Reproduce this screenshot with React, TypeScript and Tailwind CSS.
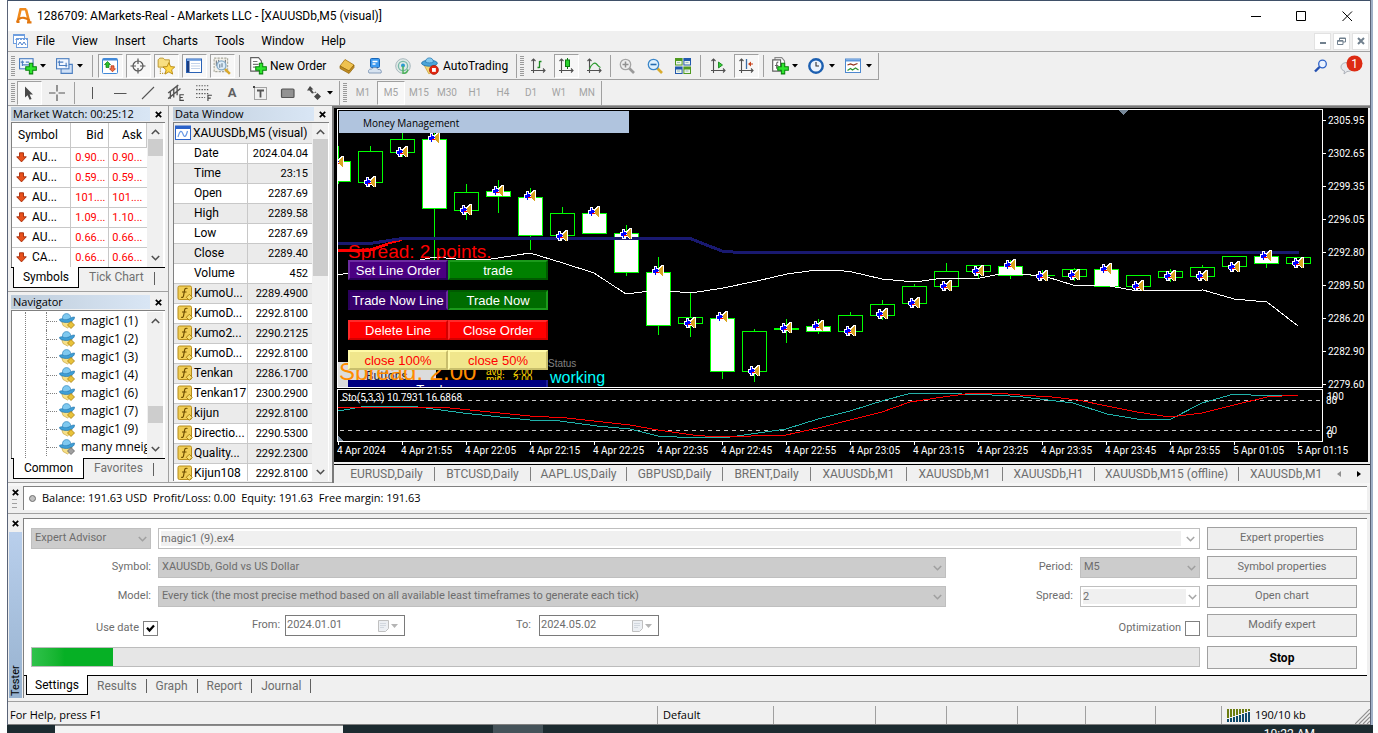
import type { ReactNode } from 'react'

interface Candle {
  high: number
  top: number
  bottom: number
  low: number
  mark: number
  bear?: boolean
}

// One candle every 32px, y values are pixels below the top of the plot
const CANDLES: Candle[] = [
  { high: 36, top: 51, bottom: 71, low: 73, mark: 52, bear: true },
  { high: 36, top: 41, bottom: 72, low: 72, mark: 72 },
  { high: 20, top: 29, bottom: 42, low: 46, mark: 42 },
  { high: 22, top: 29, bottom: 98, low: 150, mark: 28, bear: true },
  { high: 74, top: 82, bottom: 100, low: 109, mark: 100 },
  { high: 70, top: 81, bottom: 86, low: 102, mark: 81, bear: true },
  { high: 78, top: 87, bottom: 125, low: 139, mark: 86, bear: true },
  { high: 97, top: 103, bottom: 125, low: 125, mark: 126 },
  { high: 103, top: 103, bottom: 123, low: 123, mark: 102, bear: true },
  { high: 115, top: 123, bottom: 162, low: 165, mark: 124, bear: true },
  { high: 147, top: 162, bottom: 215, low: 224, mark: 161, bear: true },
  { high: 183, top: 207, bottom: 213, low: 226, mark: 213 },
  { high: 204, top: 208, bottom: 261, low: 268, mark: 207, bear: true },
  { high: 219, top: 221, bottom: 261, low: 271, mark: 261 },
  { high: 209, top: 218, bottom: 219, low: 232, mark: 218 },
  { high: 209, top: 216, bottom: 221, low: 223, mark: 216, bear: true },
  { high: 202, top: 205, bottom: 221, low: 221, mark: 221 },
  { high: 190, top: 194, bottom: 205, low: 209, mark: 204 },
  { high: 174, top: 176, bottom: 193, low: 193, mark: 193 },
  { high: 153, top: 161, bottom: 176, low: 176, mark: 176 },
  { high: 155, top: 155, bottom: 161, low: 168, mark: 161 },
  { high: 150, top: 156, bottom: 165, low: 168, mark: 155, bear: true },
  { high: 160, top: 165, bottom: 165, low: 168, mark: 166 },
  { high: 158, top: 159, bottom: 166, low: 170, mark: 165 },
  { high: 156, top: 159, bottom: 176, low: 176, mark: 159, bear: true },
  { high: 165, top: 165, bottom: 176, low: 176, mark: 176 },
  { high: 159, top: 161, bottom: 167, low: 171, mark: 166 },
  { high: 155, top: 157, bottom: 166, low: 166, mark: 166 },
  { high: 146, top: 146, bottom: 156, low: 156, mark: 157 },
  { high: 142, top: 146, bottom: 153, low: 157, mark: 146, bear: true },
  { high: 147, top: 147, bottom: 153, low: 153, mark: 153 },
]

const PRICES = ['2305.95', '2302.65', '2299.35', '2296.05', '2292.80', '2289.50', '2286.20', '2282.90', '2279.60']

const TIMES = [
  '4 Apr 2024', '4 Apr 21:55', '4 Apr 22:05', '4 Apr 22:15', '4 Apr 22:25', '4 Apr 22:35', '4 Apr 22:45', '4 Apr 22:55',
  '4 Apr 23:05', '4 Apr 23:15', '4 Apr 23:25', '4 Apr 23:35', '4 Apr 23:45', '4 Apr 23:55', '5 Apr 01:05', '5 Apr 01:15',
]

const QUOTES = [
  ['AU...', '0.90...', '0.90...'],
  ['AU...', '0.59...', '0.59...'],
  ['AU...', '101....', '101....'],
  ['AU...', '1.09...', '1.10...'],
  ['AU...', '0.66...', '0.66...'],
  ['CA...', '0.66...', '0.66...'],
]

const BAR_DATA = [
  ['Date', '2024.04.04'], ['Time', '23:15'], ['Open', '2287.69'], ['High', '2289.58'],
  ['Low', '2287.69'], ['Close', '2289.40'], ['Volume', '452'],
]

const INDICATOR_DATA = [
  ['KumoU...', '2289.4900'], ['KumoD...', '2292.8100'], ['Kumo2...', '2290.2125'], ['KumoD...', '2292.8100'],
  ['Tenkan', '2286.1700'], ['Tenkan17', '2300.2900'], ['kijun', '2292.8100'], ['Directio...', '2290.5300'],
  ['Quality...', '2292.2300'], ['Kijun108', '2292.8100'],
]

const EXPERTS = ['magic1 (1)', 'magic1 (2)', 'magic1 (3)', 'magic1 (4)', 'magic1 (6)', 'magic1 (7)', 'magic1 (9)', 'many mneig']

const CHART_TABS = [
  { label: 'EURUSD,Daily', width: 'w-24' },
  { label: 'BTCUSD,Daily', width: 'w-24' },
  { label: 'AAPL.US,Daily', width: 'w-24' },
  { label: 'GBPUSD,Daily', width: 'w-24' },
  { label: 'BRENT,Daily', width: 'w-[88px]' },
  { label: 'XAUUSDb,M1', width: 'w-24' },
  { label: 'XAUUSDb,M1', width: 'w-24' },
  { label: 'XAUUSDb,H1', width: 'w-[92px]' },
  { label: 'XAUUSDb,M15 (offline)', width: 'w-36' },
]

const PERIODS = ['M1', 'M5', 'M15', 'M30', 'H1', 'H4', 'D1', 'W1', 'MN']

/* ---------- small shared pieces ---------- */

function Icon({ children, size = 16 }: { children: ReactNode; size?: number }) {
  return (
    <svg width={size} height={size} viewBox="0 0 16 16" fill="none" className="shrink-0">
      {children}
    </svg>
  )
}

function Grip() {
  return (
    <div className="ml-[3px] flex h-[20px] w-1 flex-col justify-between">
      {Array.from({ length: 10 }, (_, i) => (
        <span key={i} className="h-px w-full bg-[#9a9a9a]" />
      ))}
    </div>
  )
}

function Separator() {
  return <div className="mx-[3px] h-[22px] w-px bg-[#a0a0a0]" />
}

function Caret() {
  return (
    <svg width="6" height="4" viewBox="0 0 6 4" className="shrink-0">
      <path d="M0 0h6L3 3.5z" fill="#000" />
    </svg>
  )
}

function ToolButton({ label, pressed, children }: { label: string; pressed?: boolean; children: ReactNode }) {
  return (
    <button type="button" aria-label={label} className="flex h-6 w-7 shrink-0 items-center justify-center">
      <span
        className={
          pressed
            ? 'flex h-6 w-[25px] items-center justify-center border border-r-white border-b-white border-l-[#a0a0a0] border-t-[#a0a0a0] bg-[#f7f7f7]'
            : 'flex h-6 w-[25px] items-center justify-center'
        }
      >
        {children}
      </span>
    </button>
  )
}

function DropButton({ label, children }: { label: string; children: ReactNode }) {
  return (
    <button type="button" aria-label={label} className="flex h-6 w-[37px] shrink-0 items-center justify-between pr-[6px] pl-1">
      {children}
      <Caret />
    </button>
  )
}

function Chevron({ up, color = '#505050' }: { up?: boolean; color?: string }) {
  return (
    <svg width="9" height="6" viewBox="0 0 9 6" fill="none" className="shrink-0">
      <path d={up ? 'M.8 5 4.5 1.3 8.2 5' : 'M.8 1 4.5 4.7 8.2 1'} stroke={color} strokeWidth="1.6" />
    </svg>
  )
}

function CloseGlyph() {
  return (
    <svg width="7" height="7" viewBox="0 0 7 7" className="shrink-0">
      <path d="M.8.8l5.4 5.4M6.2.8.8 6.2" stroke="#000" strokeWidth="1.7" />
    </svg>
  )
}

function PaneTitle({ title }: { title: string }) {
  return (
    <div className="flex h-[14px] items-center justify-between pr-[2px]">
      <h2 className="mr-1 h-full grow bg-linear-to-r from-[#bfcddb] to-[#d9e6f5] pl-[2px] font-['Open_Sans',sans-serif] leading-[13px]">{title}</h2>
      <button type="button" aria-label={`Close ${title}`} className="p-px">
        <CloseGlyph />
      </button>
    </div>
  )
}

function ScrollBar({ offset, thumb }: { offset: string; thumb: string }) {
  return (
    <div className="flex w-4 shrink-0 flex-col items-center justify-between bg-[#f0f0f0] py-[6px]">
      <Chevron up />
      <div className={`w-[15px] grow ${offset}`}>
        <div className={`w-full bg-[#cdcdcd] ${thumb}`} />
      </div>
      <Chevron />
    </div>
  )
}

function PaneTabs({ active, other, width }: { active: string; other: string; width: string }) {
  return (
    <div className="flex h-[22px] border-t border-black pl-[2px] text-xs">
      <button type="button" className={`-mt-px h-[21px] border border-t-0 border-black bg-white pb-px ${width}`}>
        {active}
      </button>
      <button type="button" className="h-[18px] px-[10px] text-[#707070]">
        {other}
      </button>
      <span className="mt-1 h-[13px] w-px bg-[#606060]" />
    </div>
  )
}

/* ---------- icons ---------- */

const axes = <path d="M3.5 1v14M1 12.5h14M1.5 3l2-2 2 2M13 10.5l2 2-2 2" stroke="#505050" strokeWidth="1.1" />
const plus = <path d="M9.2 5.500h3v3.200h3.200v3h-3.200V15h-3v-3.300H6v-3h3.200z" fill="#2ee62e" stroke="#08820c" strokeWidth=".9" />
const lensHandle = 'M10 10l5 5'

function AdvisorIcon({ badge = '#e8c23a', edge = '#a87d0c' }: { badge?: string; edge?: string }) {
  return (
    <>
      <path d="M2.500 8h10.500l-1.500 4.500-3 2.500-4.500-2.500z" fill="#f6df85" stroke="#c49a30" strokeWidth=".6" />
      <path d="M.3 6.500C2 4.800 5 6.500 8 6.200s5-2.500 7.500-2.200c.3 3-3.500 5.500-8 5.500C4 9.500.8 8.700.3 6.500z" fill="#3f9fd6" stroke="#1f6fa6" strokeWidth=".6" />
      <path d="M3.500 6C3 2.800 4.800.6 7.500.6c2.500 0 4 1.600 4.300 4.200-2 1.800-6 2.500-8.300 1.200z" fill="#7fc9f0" stroke="#2a7db5" strokeWidth=".6" />
      <path d="M12 8.500l3.500 3.500-3.500 3.500L8.500 12z" fill={badge} stroke={edge} strokeWidth=".8" />
    </>
  )
}

function FunctionIcon() {
  return (
    <Icon>
      <rect x="1" y="1" width="13.500" height="13.500" rx="1.500" fill="#f0cd55" stroke="#b68d1b" />
      <path d="M10.500 3.500c-2-.8-2.700.3-3 2L6.500 11c-.2 1.300-1 1.700-2.300 1.200M5 7h4.500" stroke="#6d4c00" strokeWidth="1.200" />
      <path d="M12.300 9.300l3 3-3 3-3-3z" fill="#f5dd70" stroke="#a67a0a" strokeWidth=".9" />
    </Icon>
  )
}

function DownArrow() {
  return (
    <svg width="11" height="11" viewBox="0 0 11 11" className="shrink-0">
      <path d="M3.500.8h4v4h2.800L5.500 9.900.7 4.800h2.800z" fill="#e8501c" stroke="#a32a08" strokeWidth=".9" />
    </svg>
  )
}

function ListIcon() {
  return (
    <Icon>
      <rect x=".5" y="1" width="15" height="13.500" fill="#fff" stroke="#2a62b5" />
      <path d="M1 2h14" stroke="#5b92dc" strokeWidth="1.500" />
      <path d="M1 3h2.500v11H1z" fill="#1b3d80" />
      <path d="M5 5.500h9M5 8h9M5 10.500h9" stroke="#c3d3ea" />
    </Icon>
  )
}

/* ---------- window chrome ---------- */

function TitleBar() {
  return (
    <header className="flex h-[31px] items-center border-t border-[#3f5068] bg-white pl-2 text-xs">
      <svg width="16" height="16" viewBox="0 0 16 16" className="mr-[5px]" fill="none">
        <path d="M3.500 1.300h6.800M4.500 1.500 2 12.500M10 1.500l3.300 13" stroke="#f08a1c" strokeWidth="2.600" />
        <path d="M1 14c1-3 4-4.500 7-4.200 2.500.2 4 1.200 5.500 3M.5 14h3M11 14.300h4.500" stroke="#e2770f" strokeWidth="2.200" />
      </svg>
      <h1>1286709: AMarkets-Real - AMarkets LLC - [XAUUSDb,M5 (visual)]</h1>
      <div className="ml-auto flex">
        <button type="button" aria-label="Minimize" className="flex w-[45px] justify-center">
          <svg width="11" height="11" viewBox="0 0 11 11"><path d="M0 5.500h10" stroke="#000" /></svg>
        </button>
        <button type="button" aria-label="Maximize" className="flex w-[45px] justify-center">
          <svg width="11" height="11" viewBox="0 0 11 11"><path d="M.5.5h9v9h-9z" fill="none" stroke="#000" /></svg>
        </button>
        <button type="button" aria-label="Close" className="flex w-[46px] justify-center">
          <svg width="11" height="11" viewBox="0 0 11 11"><path d="M.5.5l9.500 9.500M10 .5.5 10" stroke="#000" /></svg>
        </button>
      </div>
    </header>
  )
}

function MenuBar() {
  return (
    <nav className="flex h-[21px] items-center border-b border-[#a0a0a0] pl-[5px] text-xs">
      <Icon>
        <rect x=".5" y="1.500" width="11" height="9" fill="#fff" stroke="#6f9ede" />
        <path d="M1 2.500h10M2.500 7l1.500-2 1.500 2" stroke="#6f9ede" />
        <rect x="3.500" y="5.500" width="11" height="9" fill="#fff" stroke="#6f9ede" />
        <path d="M4 6.500h10" stroke="#6f9ede" strokeDasharray="2 1" />
        <path d="M5 12l2-3 2 3 2-3 2 3" stroke="#4a80cd" />
      </Icon>
      <ul className="ml-[7px] flex gap-[17px]">
        {['File', 'View', 'Insert', 'Charts', 'Tools', 'Window', 'Help'].map((item) => (
          <li key={item}>
            <button type="button">{item}</button>
          </li>
        ))}
      </ul>
      <div className="ml-auto flex gap-[2px] pr-px">
        <button type="button" aria-label="Minimize chart" className="flex h-[17px] w-[17px] items-center justify-center border border-[#e2e2e2] bg-white">
          <span className="mt-1 h-[2px] w-[6px] bg-[#71808e]" />
        </button>
        <button type="button" aria-label="Restore chart" className="flex h-[17px] w-[17px] items-center justify-center border border-[#e2e2e2] bg-white">
          <svg width="9" height="9" viewBox="0 0 9 9" fill="none" stroke="#71808e">
            <path d="M2.500 3V1h6v4H6M.5 3.500h5.500v4H.5zM2 1.500h6M.5 4.200h5.500" />
          </svg>
        </button>
        <button type="button" aria-label="Close chart" className="flex h-[17px] w-[17px] items-center justify-center border border-[#e2e2e2] bg-white">
          <svg width="8" height="8" viewBox="0 0 8 8"><path d="M1 1l6 6M7 1 1 7" stroke="#71808e" strokeWidth="2" /></svg>
        </button>
      </div>
    </nav>
  )
}

function MainToolbar() {
  return (
    <div className="flex h-[28px] items-start pt-px text-xs">
      <div className="flex h-[27px] items-center border-b border-r border-[#a0a0a0]">
        <Grip />
        <DropButton label="New chart">
          <Icon size={18}>
            <rect x=".5" y="1.500" width="12" height="9" fill="#f2f7ff" stroke="#4d7fc0" />
            <path d="M3 3v5M1.500 4.500h3M3 7h6M6 4.500h3" stroke="#4d7fc0" />
            {plus}
          </Icon>
        </DropButton>
        <DropButton label="Profiles">
          <Icon size={18}>
            <path d="M4.500 6.500h10v8h-10z" fill="#cfe0f7" stroke="#4d7fc0" />
            <rect x=".5" y="1.500" width="11" height="9" fill="#f2f7ff" stroke="#4d7fc0" />
            <path d="M1.500 4.500h5M3 3v5M9 5v4M3 7.500h7" stroke="#4d7fc0" />
          </Icon>
        </DropButton>
        <Separator />
        <ToolButton label="Market Watch" pressed>
          <Icon>
            <rect x=".5" y=".5" width="15" height="15" rx="1" fill="#fff" stroke="#4088d8" />
            <path d="M1 1.500h14" stroke="#4088d8" strokeWidth="2" />
            <path d="M5.500 3.500l3 3H7v3H4v-3H2.500z" fill="#2bc12b" stroke="#0a7a10" strokeWidth=".7" />
            <path d="M10.500 13.800l3-3H12v-3H9v3H7.500z" fill="#f07045" stroke="#b02c0c" strokeWidth=".7" />
          </Icon>
        </ToolButton>
        <ToolButton label="Data Window" pressed>
          <Icon>
            <circle cx="8" cy="8" r="5" stroke="#555" strokeWidth="1.200" />
            <path d="M8 .5V6M8 10v5.500M.5 8H6M10 8h5.500" stroke="#555" strokeWidth="1.200" />
          </Icon>
        </ToolButton>
        <ToolButton label="Navigator" pressed>
          <Icon size={18}>
            <path d="M1 2.500l1.500-1.500h3L7 2.500h4V9H1z" fill="#f8df82" stroke="#b8922b" strokeWidth=".8" />
            <path d="M3 10v4.500h4" stroke="#b8922b" strokeDasharray="1 1" />
            <path d="M10.500 5l1.600 3.500 3.700.4-2.800 2.500.9 3.800-3.400-2-3.300 2 .9-3.800-2.800-2.500 3.700-.4z" fill="#ffd84a" stroke="#b5870f" strokeWidth=".8" />
          </Icon>
        </ToolButton>
        <ToolButton label="Terminal" pressed><ListIcon /></ToolButton>
        <ToolButton label="Strategy Tester" pressed>
          <Icon size={18}>
            <path d="M1 1h12v12H1z" fill="#f3f1ea" stroke="#a8a89c" strokeDasharray="2 1" />
            <path d="M3 3v5M5 2.500v4M11 2.500v5" stroke="#7a8088" />
            <path d="M10.500 10.500l4.500 4.500" stroke="#d9a92c" strokeWidth="2.200" />
            <circle cx="7.500" cy="7.500" r="4" fill="#d8ecfb" fillOpacity=".85" stroke="#86abc8" strokeWidth="1.200" />
            <path d="M6 9.500V6.500M8 9V5.500" stroke="#6c8296" />
          </Icon>
        </ToolButton>
        <Separator />
        <button type="button" className="flex h-6 w-[90px] items-center gap-[3px] pl-[6px] whitespace-nowrap">
          <Icon size={18}>
            <path d="M1.500.5h7l2.500 3v9h-9.500z" fill="#fff" stroke="#606060" />
            <path d="M3.500 4h4M3.500 6.500h5M3.500 9h3" stroke="#777" />
            {plus}
          </Icon>
          New Order
        </button>
        <ToolButton label="MetaEditor">
          <Icon>
            <path d="M1 8l5-6.500 9 5.500-5 6z" fill="#efc24f" stroke="#a57512" strokeWidth=".8" />
            <path d="M1 8v2.500l9 5 5-6V7l-5 6z" fill="#c28d22" stroke="#8f640c" strokeWidth=".7" />
          </Icon>
        </ToolButton>
        <ToolButton label="Virtual Hosting">
          <Icon>
            <rect x="3.500" y=".5" width="9" height="9" rx="1" fill="#3d9af0" stroke="#1966b8" />
            <path d="M5.500 3.500h5M5.500 6h3" stroke="#fff" strokeWidth="1.400" />
            <path d="M2 15c-1.500-2.500.5-4.500 2.500-3.800C6 8.500 10.500 9 11 11.500c3-.5 4 1.500 3 3.500z" fill="#d7e3f0" stroke="#7a94b3" strokeWidth=".9" />
          </Icon>
        </ToolButton>
        <ToolButton label="Signals">
          <Icon>
            <circle cx="8" cy="8" r="7.300" fill="#dfe9e6" stroke="#a9b9bf" />
            <circle cx="8" cy="8" r="4.600" stroke="#79b8a8" strokeWidth="1.300" />
            <circle cx="8" cy="7.500" r="2" fill="#2a9ad0" />
            <path d="M8 8v7.500c3 0 4.500-2 5-4" stroke="#4fb35c" strokeWidth="1.500" />
          </Icon>
        </ToolButton>
        <button type="button" className="flex h-6 w-[96px] items-center gap-1 pl-1 whitespace-nowrap">
          <Icon size={18}>
            <path d="M2 6l5 9 6-3V6z" fill="#f4d774" stroke="#c49a30" strokeWidth=".6" />
            <ellipse cx="7.500" cy="5.500" rx="7" ry="2.700" fill="#4aa4d8" stroke="#1f6fa6" strokeWidth=".7" />
            <path d="M4 4.500C4 2 5.500.8 7.500.8S11 2 11 4.500c-2 1-5 1-7 0z" fill="#83c9ee" stroke="#2a7db5" strokeWidth=".7" />
            <circle cx="11.500" cy="11.500" r="4" fill="#e2260f" stroke="#a31304" strokeWidth=".6" />
            <rect x="9.800" y="9.800" width="3.400" height="3.400" fill="#fff" />
          </Icon>
          AutoTrading
        </button>
        <div className="ml-[3px] h-6 w-px bg-[#a0a0a0]" />
        <Grip />
        <ToolButton label="Bar chart">
          <Icon>{axes}<path d="M9.500 3v7M7.500 9.500h2M9.500 3.500h2" stroke="#1e8b22" strokeWidth="1.300" /></Icon>
        </ToolButton>
        <ToolButton label="Candlesticks" pressed>
          <Icon>{axes}<path d="M9.500 0v11" stroke="#0b7a10" /><rect x="7.500" y="2" width="4" height="6.500" fill="#28d32c" stroke="#0b7a10" /></Icon>
        </ToolButton>
        <ToolButton label="Line chart">
          <Icon>{axes}<path d="M3.500 11c2-5 5-7 7-5s2 3 4 3.500" stroke="#2c9a30" strokeWidth="1.200" /></Icon>
        </ToolButton>
        <div className="mx-[2px] h-[22px] w-px bg-[#a0a0a0]" />
        <ToolButton label="Zoom in">
          <Icon>
            <path d={lensHandle} stroke="#9a9a9a" strokeWidth="2.600" />
            <circle cx="6.500" cy="6.500" r="5.200" fill="#eee" stroke="#a5a5a5" strokeWidth="1.300" />
            <path d="M3.500 6.500h6M6.500 3.500v6" stroke="#909090" strokeWidth="1.500" />
          </Icon>
        </ToolButton>
        <ToolButton label="Zoom out">
          <Icon>
            <path d={lensHandle} stroke="#d9ac2e" strokeWidth="2.600" />
            <circle cx="6.500" cy="6.500" r="5.200" fill="#dff1fd" stroke="#3c87c9" strokeWidth="1.300" />
            <path d="M3.500 6.500h6" stroke="#256cae" strokeWidth="1.600" />
          </Icon>
        </ToolButton>
        <ToolButton label="Tile windows">
          <Icon>
            <path d="M0 0h7.600v7.600H0zM8.400 8.400H16V16H8.400z" fill="#4f9a20" />
            <path d="M8.400 0H16v7.600H8.400zM0 8.400h7.600V16H0z" fill="#2259ae" />
            <path d="M1 3h5.600v3.600H1zM9.400 3H15v3.600H9.400zM1 11.400h5.600V15H1zM9.400 11.400H15V15H9.400z" fill="#eef5ea" />
            <path d="M2 4.500h3M10.500 4.500h3M2 13h3M10.500 13h3" stroke="#9bb" />
          </Icon>
        </ToolButton>
        <Separator />
        <ToolButton label="Auto scroll">
          <Icon>{axes}<path d="M8.500 4v6l4-3z" fill="#35d03a" stroke="#0b7a10" strokeWidth=".8" /></Icon>
        </ToolButton>
        <ToolButton label="Chart shift" pressed>
          <Icon>{axes}<path d="M8.500 1v10" stroke="#3b6ea8" strokeWidth="1.300" /><path d="M10 6l3-2.500V5.500h2v1h-2v2z" fill="#c8421a" /></Icon>
        </ToolButton>
        <Separator />
        <DropButton label="Indicators">
          <Icon size={18}>
            <path d="M3.500 2.500v-2h6l2.500 3v6" fill="#fff" stroke="#888" />
            <path d="M1.500 2.500h7v10h-7z" fill="#fff" stroke="#606060" />
            <path d="M6.500 4.500c-1.500 0-1.500 0-1.500 6M3.500 7.500h3" stroke="#666" />
            {plus}
          </Icon>
        </DropButton>
        <DropButton label="Periods">
          <Icon>
            <circle cx="8" cy="8" r="6.700" fill="#eaf3fd" stroke="#1c5fb0" strokeWidth="2.400" />
            <path d="M8 4V8h3" stroke="#333" strokeWidth="1.100" />
          </Icon>
        </DropButton>
        <DropButton label="Templates">
          <Icon>
            <rect x=".5" y="1" width="15" height="13.500" fill="#fff" stroke="#4d88cf" />
            <path d="M1 2.500h14" stroke="#5c97dc" strokeWidth="2" />
            <path d="M2.500 7l3-1 3 1 4-1.500" stroke="#93341d" strokeWidth="1.200" />
            <path d="M2.500 12.500l3-2 2 1.500 3-2 3 2" stroke="#2b9330" strokeWidth="1.200" />
          </Icon>
        </DropButton>
      </div>
      <div className="ml-auto flex items-center gap-3 pr-[7px]">
        <button type="button" aria-label="Search" className="pt-[3px]">
          <svg width="14" height="14" viewBox="0 0 14 14" fill="none">
            <circle cx="8.500" cy="5" r="3.800" fill="#eaf2ff" stroke="#2d62c8" strokeWidth="1.300" />
            <path d="M5.500 8 1 12.500" stroke="#2450b0" strokeWidth="2.400" />
          </svg>
        </button>
        <button type="button" aria-label="Notifications">
          <svg width="23" height="22" viewBox="0 0 23 22">
            <path d="M1 14c0-3 3-4.500 6-4.500s6 1.500 6 4.500-2.500 4.500-6 4.500L4 21l.5-3C2.500 17.500 1 16 1 14z" fill="#e6e8ec" stroke="#a7abb3" strokeWidth=".9" />
            <circle cx="14.500" cy="10.500" r="8" fill="#dd2a12" />
            <text x="14.500" y="15" fontSize="12" textAnchor="middle" fill="#fff">1</text>
          </svg>
        </button>
      </div>
    </div>
  )
}

function DrawToolbar() {
  return (
    <div className="flex h-[25px] items-center text-[11px]">
      <Grip />
      <ToolButton label="Cursor" pressed>
        <Icon><path d="M4 1.500v11l2.600-2.300 2 4.600 2-.9-2-4.500H12z" fill="#484848" /></Icon>
      </ToolButton>
      <ToolButton label="Crosshair">
        <Icon><path d="M8 0v6.500M8 9.500V16M0 8h6.500M9.500 8H16" stroke="#555" strokeWidth="1.200" /></Icon>
      </ToolButton>
      <Separator />
      <ToolButton label="Vertical line"><Icon><path d="M8.500 2v12" stroke="#555" /></Icon></ToolButton>
      <ToolButton label="Horizontal line"><Icon><path d="M2 8.500h12.500" stroke="#555" /></Icon></ToolButton>
      <ToolButton label="Trendline"><Icon><path d="M2 14 14 2" stroke="#555" strokeWidth="1.100" /></Icon></ToolButton>
      <ToolButton label="Equidistant channel">
        <Icon size={18}>
          <path d="M1 8l9-7M1 13l11-9M3 6v7M6 4v8M9 1v9" stroke="#555" strokeWidth="1.200" />
          <path d="M15 9.500h-3.500v5H15M11.500 12H14" stroke="#444" />
        </Icon>
      </ToolButton>
      <ToolButton label="Fibonacci retracement">
        <Icon size={18}>
          <path d="M1 1.500h12M1 5h12M1 8.500h12M1 12h8" stroke="#555" strokeDasharray="1.200 1.200" />
          <path d="M15 10h-3.500v5M11.500 12.500H14" stroke="#444" />
        </Icon>
      </ToolButton>
      <ToolButton label="Text"><span className="text-[13px] font-bold text-[#606060]">A</span></ToolButton>
      <ToolButton label="Text label">
        <Icon>
          <rect x="2.500" y="2.500" width="12" height="12" stroke="#555" strokeDasharray="1 1" />
          <path d="M5 5.500h7M8.500 5v7.500" stroke="#555" strokeWidth="1.800" />
          <path d="M1 1h2v2H1z" fill="#444" />
        </Icon>
      </ToolButton>
      <ToolButton label="Rectangle"><Icon><rect x="1.500" y="4" width="12.500" height="8.500" rx="1" fill="#929292" stroke="#555" strokeWidth="1.200" /></Icon></ToolButton>
      <DropButton label="Arrows">
        <Icon>
          <path d="M4 1l3.500 3.500H5.500L8 8l1.500-1.500 1 1L6 8.500 3.500 5.500H1zM11.500 8l3.500 3.500-3.500 3.500L8 11.500z" fill="#484848" />
        </Icon>
      </DropButton>
      <div className="h-6 w-px bg-[#a0a0a0]" />
      <Grip />
      <div className="ml-[2px] flex text-[10px] text-[#a3a3a3]">
        {PERIODS.map((p) => (
          <button
            key={p}
            type="button"
            className={
              p === 'M5'
                ? 'h-6 w-7 border border-l-[#a0a0a0] border-t-[#a0a0a0] border-r-white border-b-white bg-[#f7f7f7]'
                : 'h-6 w-7'
            }
          >
            {p}
          </button>
        ))}
      </div>
      <div className="h-6 w-px bg-[#a0a0a0]" />
    </div>
  )
}

/* ---------- side panes ---------- */

function MarketWatch() {
  return (
    <section className="border-b border-[#a0a0a0] pt-px pr-[3px] pb-[2px] pl-[3px]">
      <PaneTitle title="Market Watch: 00:25:12" />
      <div className="mt-px flex h-[145px] overflow-hidden border-l border-t border-[#808080] bg-white">
        <table className="w-[135px] table-fixed border-collapse text-xs">
          <thead>
            <tr className="h-6">
              <th className="w-[58px] border-r border-b border-[#c8c8c8] pl-[6px] text-left font-normal">Symbol</th>
              <th className="w-[38px] border-r border-b border-[#c8c8c8] pr-1 text-right font-normal">Bid</th>
              <th className="border-r border-b border-[#c8c8c8] pr-1 text-right font-normal">Ask</th>
            </tr>
          </thead>
          <tbody>
            {QUOTES.map(([symbol, bid, ask], i) => (
              <tr key={i} className="h-5 leading-[17px]">
                <td className="border-r border-b border-[#c8c8c8] pl-1">
                  <span className="flex items-center gap-[5px]">
                    <DownArrow />
                    {symbol}
                  </span>
                </td>
                <td className="border-r border-b border-[#c8c8c8] pr-[2px] text-right text-[11px] text-[#ff0000]">{bid}</td>
                <td className="border-b border-[#c8c8c8] pr-1 text-right text-[11px] text-[#ff0000]">{ask}</td>
              </tr>
            ))}
          </tbody>
        </table>
        <ScrollBar offset="pt-1" thumb="h-[17px]" />
      </div>
      <PaneTabs active="Symbols" other="Tick Chart" width="w-[66px]" />
    </section>
  )
}

function Navigator() {
  return (
    <section className="border-b border-[#a0a0a0] pt-[3px] pr-[3px] pb-[2px] pl-[3px]">
      <PaneTitle title="Navigator" />
      <div className="mt-px flex h-[148px] overflow-hidden border-l border-t border-[#808080] bg-white pt-px">
        <ul className="ml-[13px] w-[122px] border-l border-dotted border-[#808080] pl-5">
          {EXPERTS.map((name) => (
            <li key={name} className="flex h-[18px] items-center overflow-hidden border-l border-dotted border-[#808080] whitespace-nowrap">
              <span className="mr-[2px] w-[10px] shrink-0 border-t border-dotted border-[#808080]" />
              <Icon>
                {name === 'many mneig' ? <AdvisorIcon badge="#a0a0a0" edge="#606060" /> : <AdvisorIcon />}
              </Icon>
              <span className="ml-[6px] font-['Open_Sans',sans-serif] text-xs">{name}</span>
            </li>
          ))}
        </ul>
        <ScrollBar offset="pt-[82px]" thumb="h-[17px]" />
      </div>
      <PaneTabs active="Common" other="Favorites" width="w-[71px]" />
    </section>
  )
}

function DataWindow() {
  const rows = [...BAR_DATA, ...INDICATOR_DATA]
  return (
    <section className="w-[164px] shrink-0 border-b border-l border-[#a0a0a0] pt-px pr-[3px] pl-[4px]">
      <PaneTitle title="Data Window" />
      <div className="mt-px flex h-[359px] overflow-hidden border-l border-t border-[#808080] bg-white">
        <table className="w-[138px] table-fixed border-collapse text-xs">
          <colgroup>
            <col className="w-[73px]" />
            <col />
          </colgroup>
          <thead>
            <tr className="h-5 bg-[#ebebeb]">
              <th colSpan={2} className="border-b border-[#c8c8c8] pl-px font-normal">
                <span className="flex items-center gap-[2px] whitespace-nowrap">
                  <Icon>
                    <rect x=".5" y="1" width="15" height="13.500" fill="#fff" stroke="#2a62c9" />
                    <path d="M0 2.500h16" stroke="#2a62c9" strokeWidth="3" />
                    <path d="M3 12c2-7 3.500-7 5-3s3 3 4.500-3" stroke="#6b9be5" strokeWidth="1.200" />
                  </Icon>
                  XAUUSDb,M5 (visual)
                </span>
              </th>
            </tr>
          </thead>
          <tbody>
            {rows.map(([name, value], i) => (
              <tr key={i} className={i % 2 ? 'h-5 bg-[#ebebeb] leading-[17px]' : 'h-5 leading-[17px]'}>
                <td className="border-r border-b border-[#c8c8c8]">
                  <span className={i < BAR_DATA.length ? 'flex pl-5' : 'flex items-center gap-px pl-[3px] whitespace-nowrap'}>
                    {i >= BAR_DATA.length && <FunctionIcon />}
                    {name}
                  </span>
                </td>
                <td className="border-b border-[#c8c8c8] pr-1 text-right text-[11px]">{value}</td>
              </tr>
            ))}
          </tbody>
        </table>
        <ScrollBar offset="pt-1" thumb="h-[137px]" />
      </div>
    </section>
  )
}

/* ---------- chart ---------- */

function TradeMark({ x, y }: { x: number; y: number }) {
  return (
    <g transform={`translate(${x} ${y})`}>
      <path d="M-4-5h3v2h2v-1l3-2h2V5H4L1 3H0v2h-4V3h-1V2h-1v-4h2z" fill="#fff" />
      <path d="M-3-4h1v2h2v1h1v1H0v2h-2v2h-1V2h-2V-1h2z" fill="#0000ff" />
      <path d="M-2 1h4v1h-4z" fill="#ff0000" />
      <path d="M5-5V5H4L1 1V-1l3-4z" fill="#daa520" />
    </g>
  )
}

const PANEL_BUTTONS = [
  { label: 'Set Line Order', look: 'bg-[#4b0082] text-white border-[#6c2ba0] border-r-[#2a005c] border-b-[#2a005c]' },
  { label: 'trade', look: 'bg-[#008000] text-white border-[#1c9a1c] border-r-[#005a00] border-b-[#005a00]' },
  { label: 'Trade Now Line', look: 'bg-[#38006c] text-white border-[#2a005c] border-r-[#6c2ba0] border-b-[#38006c]' },
  { label: 'Trade Now', look: 'bg-[#006c00] text-white border-[#005a00] border-r-[#1c9a1c] border-b-[#1c9a1c]' },
  { label: 'Delete Line', look: 'bg-[#ff0000] text-white border-[#ff2a2a] border-r-[#d40000] border-b-[#d40000]' },
  { label: 'Close Order', look: 'bg-[#ff0000] text-white border-[#ff2a2a] border-r-[#d40000] border-b-[#d40000]' },
  { label: 'close 100%', look: 'bg-[#f0e68c] text-[#ff0000] border-[#fffaa8] border-r-[#c8be6c] border-b-[#c8be6c]' },
  { label: 'close 50%', look: 'bg-[#f0e68c] text-[#ff0000] border-[#fffaa8] border-r-[#c8be6c] border-b-[#c8be6c]' },
]

function PricePlot() {
  return (
    <div className="relative h-[279px] overflow-hidden border border-white">
      <svg className="block h-full w-full" shapeRendering="crispEdges">
        {CANDLES.map((c, i) => {
          const x = i * 32
          return (
            <g key={i}>
              <rect x={x} y={c.high} width="1" height={c.low - c.high + 1} fill="#00ff00" />
              <rect x={x - 12} y={c.top} width="25" height={c.bottom - c.top + 1} fill="#00ff00" />
              <rect x={x - 11} y={c.top + 1} width="23" height={Math.max(0, c.bottom - c.top - 1)} fill={c.bear ? '#fff' : '#000'} />
            </g>
          )
        })}
        <polyline
          fill="none"
          stroke="#fff"
          points="0,165 16,162 64,154 87,149 97,147 118,149 147,150 192,143 225,153 256,163 288,184 320,180 353,183 385,178 419,171 449,164 479,160 498,160 514,162 544,169 577,172 605,168 642,168 662,164 685,164 709,167 735,175 772,176 799,181 865,180 896,189 929,192 960,216"
        />
        <polyline fill="none" stroke="#ff0000" strokeWidth="3" points="0,141 32,140 50,134" />
        <polyline fill="none" stroke="#ff0000" strokeWidth="2" points="48,134 64,130" />
        <polyline fill="none" stroke="#191970" strokeWidth="3" points="0,133.500 32,133.500 64,128.500 352,128.500 384,141 400,142.500 961,142.500" />
        {CANDLES.map((c, i) => (
          <TradeMark key={i} x={i * 32} y={c.mark} />
        ))}
        <path d="M780 0h10l-5 5z" fill="#778899" />
      </svg>

      {/* overlay drawn by the expert on top of the candles */}
      <div className="absolute left-px top-px h-[22px] w-[290px] bg-[#b0c4de] pl-6 font-['Open_Sans',sans-serif] text-[10px] leading-[25px] text-black">
        Money Management
      </div>
      <div className="absolute left-0 top-[252px] h-[25px] w-[98px] bg-[#dcdcdc] pl-7 text-[12px] leading-[28px] text-[#202040]">Buttons</div>
      <div className="absolute left-px top-[248px] font-['Liberation_Sans',Arial,sans-serif] text-2xl leading-7 whitespace-nowrap text-[#ff8c00]">
        Spread: 2.00
      </div>
      <div className="absolute left-[148px] top-[258px] font-['Liberation_Sans',Arial,sans-serif] text-[10px] leading-[8px] text-[#ffd700]">
        <p className="flex gap-2"><span>avg:</span><span>2.00</span></p>
        <p className="flex gap-2"><span>min:</span><span>2.00</span></p>
      </div>
      <div className="absolute left-[210px] top-[248px] font-['Liberation_Sans',Arial,sans-serif] text-[10px] leading-3 text-[#808080]">Status</div>
      <div className="absolute left-[212px] top-[259px] font-['Liberation_Sans',Arial,sans-serif] text-base leading-[18px] text-[#00ffff]">working</div>
      <div className="absolute left-[10px] top-[270px] h-3 w-[200px] border-r-2 border-[#1c1c9a] bg-[#000080] pr-7 text-center font-['Liberation_Sans',Arial,sans-serif] text-[13px] leading-5 text-white">
        Trade
      </div>
      <div className="absolute left-[10px] top-[132px] font-['Liberation_Sans',Arial,sans-serif] text-[19px] leading-5 whitespace-nowrap text-[#ff0000]">
        Spread: 2 points.
      </div>
      <div className="absolute left-[10px] top-[150px] grid w-[200px] grid-cols-2 gap-y-[10px] font-['Liberation_Sans',Arial,sans-serif] text-[13px]">
        {PANEL_BUTTONS.map(({ label, look }) => (
          <button key={label} type="button" className={`h-5 border-2 pt-px leading-4 whitespace-nowrap ${look}`}>
            {label}
          </button>
        ))}
      </div>
    </div>
  )
}

function StochasticPlot() {
  return (
    <div className="relative mt-px h-[53px] overflow-hidden border border-white">
      <svg className="block h-full w-full" shapeRendering="crispEdges" fill="none">
        <path d="M2 10.500h3000M2 40.500h3000" stroke="#c8c8c8" strokeDasharray="4 4" />
        <polyline
          stroke="#20b2aa"
          points="0,21 29,16 69,16 80,17 125,23 162,27 192,30 222,31 259,36 292,39 320,46 339,47 392,47 448,39 480,29 512,21 547,10 574,3 592,3 624,4 635,4 672,6 685,7 735,13 769,24 799,29 833,29 864,13 896,4 929,6 960,5"
        />
        <polyline
          stroke="#ff0000"
          points="0,18 17,17 52,17 102,17 132,20 192,26 229,28 292,35 320,40 355,45 379,47 448,45 480,38 512,30 544,22 572,12 605,7 635,3 657,3 682,5 714,7 740,10 769,16 799,22 832,27 864,23 896,15 929,7 960,5"
        />
        <path d="M0 46l5 5H0z" fill="#778899" />
      </svg>
      <p className="absolute left-1 top-[2px] text-[10px] leading-3 text-white">Sto(5,3,3) 10.7931 16.6868</p>
    </div>
  )
}

function Chart() {
  return (
    <section className="flex min-w-0 grow flex-col border-t-2 border-l-2 border-[#7a7a7a]">
      <div className="mr-[2px] bg-black pt-px pl-[3px] text-[10px] text-white">
        <div className="flex">
          <div className="min-w-0 grow">
            <PricePlot />
            <StochasticPlot />
          </div>
          <div className="relative w-[45px] shrink-0">
            <ul className="pt-[5px]">
              {PRICES.map((p) => (
                <li key={p} className="flex h-[33px] gap-[2px] leading-[14px]">
                  <span className="mt-[6px] h-px w-[3px] bg-white" />
                  {p}
                </li>
              ))}
            </ul>
            {/* scale of the lower plot, its marks run into each other */}
            <span className="absolute left-1 top-[282px] leading-3">100</span>
            <span className="absolute left-[3px] top-[286px] leading-3">80</span>
            <span className="absolute left-[3px] top-[316px] leading-3">20</span>
            <span className="absolute left-1 top-[320px] leading-3">0</span>
          </div>
        </div>
        <ul className="flex h-5 overflow-hidden whitespace-nowrap">
          {TIMES.map((t) => (
            <li key={t} className="w-16 shrink-0">
              <span className="ml-px block h-[3px] w-px bg-white" />
              <span className="block leading-3">{t}</span>
            </li>
          ))}
        </ul>
      </div>
      <div className="mt-[2px] flex h-[19px] items-center border-t border-black pl-[5px] text-xs text-[#6d6d6d]">
        {CHART_TABS.map(({ label, width }, i) => (
          <button key={i} type="button" className={`h-[14px] shrink-0 border-r border-[#808080] leading-[14px] whitespace-nowrap ${width}`}>
            {label}
          </button>
        ))}
        <button type="button" className="shrink-0 px-[11px]">XAUUSDb,M1</button>
        <div className="ml-auto flex gap-4 pr-[9px]">
          <button type="button" aria-label="Scroll tabs left">
            <svg width="4" height="6" viewBox="0 0 4 6"><path d="M4 0v6L0 3z" fill="#909090" /></svg>
          </button>
          <button type="button" aria-label="Scroll tabs right">
            <svg width="4" height="6" viewBox="0 0 4 6"><path d="M0 0v6l4-3z" fill="#000" /></svg>
          </button>
        </div>
      </div>
    </section>
  )
}

/* ---------- bottom panes ---------- */

function BalanceBar() {
  return (
    <section className="flex h-7 border-b border-[#a0a0a0] pb-[3px] pl-[2px]">
      <div className="flex w-[13px] flex-col items-start gap-[3px] pt-[3px] pl-[2px]">
        <button type="button" aria-label="Close terminal"><CloseGlyph /></button>
        {[0, 1, 2].map((i) => (
          <span key={i} className="h-px w-[5px] bg-[#a0a0a0]" />
        ))}
      </div>
      <div className="mr-[3px] flex grow items-center gap-[6px] border-l border-t border-[#808080] bg-white pl-[5px] font-['Open_Sans',sans-serif] text-[11px] text-black">
        <span className="h-[7px] w-[7px] rounded-full border border-[#707070] bg-[#c0c0c0]" />
        <span>Balance: 191.63 USD&nbsp; Profit/Loss: 0.00&nbsp; Equity: 191.63&nbsp; Free margin: 191.63</span>
      </div>
    </section>
  )
}

function Combo({ id, label, value, className }: { id: string; label?: string; value: string; className: string }) {
  return (
    <div className={`flex h-[21px] items-center border border-[#bfbfbf] bg-white pl-[2px] ${className}`}>
      <input
        id={id}
        aria-label={label}
        defaultValue={value}
        readOnly
        className="h-[15px] min-w-0 grow bg-[#f0f0f0] leading-[15px] outline-none"
      />
      <button type="button" aria-label="Show list" className="flex w-[18px] justify-center">
        <Chevron color="#a8a8a8" />
      </button>
    </div>
  )
}

function Picker({ id, label, value, className }: { id: string; label?: string; value: string; className: string }) {
  return (
    <div className={`grid h-[21px] items-center ${className}`}>
      <select
        id={id}
        aria-label={label}
        className="col-start-1 row-start-1 h-[21px] w-full appearance-none border border-[#bfbfbf] bg-[#cccccc] pl-[3px] outline-none"
      >
        <option>{value}</option>
      </select>
      <span className="pointer-events-none col-start-1 row-start-1 flex justify-end pr-1">
        <Chevron color="#a0a0a0" />
      </span>
    </div>
  )
}

function DateBox({ id, value }: { id: string; value: string }) {
  return (
    <div className="flex h-[21px] w-[120px] items-center border border-[#7a7a7a] bg-white pr-[6px] pl-px">
      <input id={id} defaultValue={value} readOnly className="w-0 grow outline-none" />
      <svg width="20" height="12" viewBox="0 0 20 12" fill="none">
        <path d="M.5.5h10v8l-3 3h-7z" fill="#eceff3" stroke="#c0c0c0" />
        <path d="M2.500 3.500h6M2.500 5.500h6M2.500 7.500h4" stroke="#b8c0ca" strokeDasharray="1 1" />
        <path d="M13 4h7l-3.500 4z" fill="#b5b5b5" />
      </svg>
    </div>
  )
}

function Check({ label, checked, className }: { label: string; checked?: boolean; className: string }) {
  return (
    <label className={`flex items-end justify-end gap-1 ${className}`}>
      {label}
      <span className="grid h-[15px] w-[15px] place-items-center">
        <input
          type="checkbox"
          defaultChecked={checked}
          className="peer col-start-1 row-start-1 h-[15px] w-[15px] appearance-none border border-[#808080] bg-white"
        />
        <svg width="9" height="9" viewBox="0 0 9 9" className="pointer-events-none invisible col-start-1 row-start-1 peer-checked:visible">
          <path d="M1 3.800l2.500 2.800L8 1.500" fill="none" stroke="#000" strokeWidth="2.200" />
        </svg>
      </span>
    </label>
  )
}

function Tester() {
  const action = 'h-[23px] border border-[#a0a0a0] bg-[#efefef]'
  return (
    <section className="flex border-b border-[#a0a0a0] pt-1 pb-[3px]">
      <div className="flex w-[15px] flex-col pt-[2px]">
        <button type="button" aria-label="Close tester" className="ml-1 w-[7px]"><CloseGlyph /></button>
        <h2 className="mt-[5px] ml-px w-[13px] grow rotate-180 bg-linear-to-t from-[#b9cfec] to-[#97b2cf] pt-[2px] text-[11px] leading-[13px] [writing-mode:vertical-rl]">
          Tester
        </h2>
      </div>
      <div className="mr-[3px] grow border-l border-t border-[#808080]">
        <form className="flex gap-[7px] border-b border-black bg-white pt-[8px] pr-[10px] pb-[6px] pl-[7px] text-[11px] text-[#6d6d6d]">
          <div className="flex grow flex-col gap-2">
            <div className="flex gap-[7px] pt-px">
              <Picker id="kind" label="Program type" value="Expert Advisor" className="w-[120px]" />
              <Combo id="expert" label="Program" value="magic1 (9).ex4" className="grow" />
            </div>
            <div className="flex items-center gap-[7px]">
              <label htmlFor="symbol" className="w-[120px] text-right">Symbol:</label>
              <Picker id="symbol" value="XAUUSDb, Gold vs US Dollar" className="grow" />
              <label htmlFor="period" className="w-[120px] text-right">Period:</label>
              <Picker id="period" value="M5" className="w-[120px]" />
            </div>
            <div className="flex items-center gap-[7px]">
              <label htmlFor="model" className="w-[120px] text-right">Model:</label>
              <Picker
                id="model"
                value="Every tick (the most precise method based on all available least timeframes to generate each tick)"
                className="grow"
              />
              <label htmlFor="spread" className="w-[120px] text-right">Spread:</label>
              <Combo id="spread" value="2" className="w-[120px]" />
            </div>
            <div className="flex">
              <Check label="Use date" checked className="w-[127px]" />
              <label htmlFor="from" className="ml-[94px] w-[33px] leading-5">From:</label>
              <DateBox id="from" value="2024.01.01" />
              <label htmlFor="to" className="ml-[111px] w-[23px] leading-5">To:</label>
              <DateBox id="to" value="2024.05.02" />
              <Check label="Optimization" className="ml-auto" />
            </div>
            <div role="progressbar" aria-label="Test progress" aria-valuenow={7} className="mt-[3px] h-5 border border-[#bcbcbc] bg-[#e6e6e6]">
              <div className="h-full bg-linear-to-r from-[#2fc24b] to-[#06b025] to-40%" style={{ width: '6.9%' }} />
            </div>
          </div>
          <div className="flex w-[150px] shrink-0 flex-col gap-[6px]">
            <button type="button" className={action}>Expert properties</button>
            <button type="button" className={action}>Symbol properties</button>
            <button type="button" className={action}>Open chart</button>
            <button type="button" className={action}>Modify expert</button>
            <button type="button" className="mt-[3px] h-[23px] border border-[#a0a0a0] bg-[#efefef] text-xs font-bold text-black">Stop</button>
          </div>
        </form>
        <div className="flex h-[22px] pl-[2px] text-xs text-[#6d6d6d]">
          <button type="button" className="-mt-px h-5 w-[62px] border border-t-0 border-black bg-white text-black">Settings</button>
          {['Results', 'Graph', 'Report', 'Journal'].map((tab) => (
            <button key={tab} type="button" className="mt-[3px] h-[14px] border-r border-[#606060] px-[9px] leading-[14px]">
              {tab}
            </button>
          ))}
        </div>
      </div>
    </section>
  )
}

function StatusBar() {
  return (
    <footer className="flex h-[23px] items-center border-b border-[#808080] pt-1 font-['Open_Sans',sans-serif] text-[11px]">
      <span className="grow pl-[2px]">For Help, press F1</span>
      <span className="h-[18px] w-[116px] border-l border-[#a0a0a0] pl-[5px] leading-[18px]">Default</span>
      <span className="h-[18px] w-[102px] border-l border-[#a0a0a0]" />
      <span className="h-[18px] w-[71px] border-l border-[#a0a0a0]" />
      <span className="h-[18px] w-[71px] border-l border-[#a0a0a0]" />
      <span className="h-[18px] w-[68px] border-l border-[#a0a0a0]" />
      <span className="h-[18px] w-[70px] border-l border-[#a0a0a0]" />
      <span className="h-[18px] w-[66px] border-l border-[#a0a0a0]" />
      <span className="flex h-[18px] w-[134px] items-center gap-1 border-l border-[#a0a0a0] pl-[5px]">
        <svg width="24" height="13" viewBox="0 0 24 13" shapeRendering="crispEdges">
          {Array.from({ length: 8 }, (_, i) => (
            <g key={i}>
              <rect x={i * 3} y="0" width="2" height={9 - i} fill="#6b7c10" />
              <rect x={i * 3} y={10 - i} width="2" height={3 + i} fill="#0e4a6b" />
            </g>
          ))}
        </svg>
        190/10 kb
      </span>
      <svg width="15" height="15" viewBox="0 0 15 15" className="self-end">
        <path d="M0 15 15 0M4 15 15 4M8 15l7-7M12 15l3-3" stroke="#909090" strokeWidth="1.200" />
      </svg>
    </footer>
  )
}

export default function App() {
  return (
    <div className="bg-white pr-[5px] pl-[7px] font-['Roboto','Noto_Sans',sans-serif] text-[11px] text-black">
      <div className="border-r-2 border-[#9fb0c6]">
        <main className="flex flex-col border-x border-[#5a6478] bg-[#f0f0f0]">
          <TitleBar />
          <MenuBar />
          <MainToolbar />
          <DrawToolbar />
          <div className="flex border-t border-[#a0a0a0]">
            <div className="flex w-[160px] shrink-0 flex-col">
              <MarketWatch />
              <Navigator />
            </div>
            <DataWindow />
            <Chart />
          </div>
          <div className="h-[3px] bg-[#f6f6f6]" />
          <BalanceBar />
          <Tester />
          <StatusBar />
        </main>
      </div>
      <div className="flex h-2 overflow-hidden bg-[#1c2b30]">
        <div className="ml-12 h-2 w-[288px] border-t border-[#8a8a8a] bg-[#f3f3f3]" />
        <div className="ml-[150px] h-2 w-[50px] bg-[#45535a]" />
        <time className="ml-auto h-2 pr-[58px] text-xs leading-[18px] text-white">10:22 AM</time>
      </div>
    </div>
  )
}
